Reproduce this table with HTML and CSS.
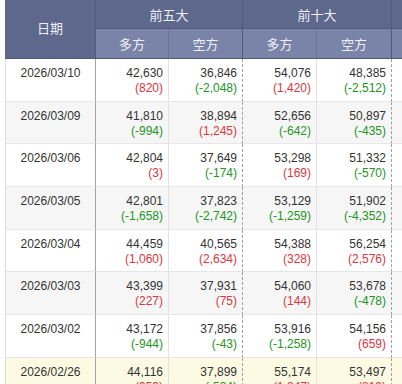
FILE: index.html
```html
<!DOCTYPE html>
<html>
<head>
  <title>大額交易人未沖銷部位</title>
  <link rel="stylesheet" href="styles.css">
</head>
<body>
  <table class="grid">
    <colgroup>
      <col class="c-date">
      <col class="c-a">
      <col class="c-b">
      <col class="c-b">
      <col class="c-c">
      <col class="c-c">
    </colgroup>
    <thead>
      <tr class="top">
        <th rowspan="2" class="h-date">日期</th>
        <th colspan="2" class="h-grp">前五大</th>
        <th colspan="2" class="h-grp">前十大</th>
        <th class="h-grp"></th>
      </tr>
      <tr class="sub">
        <th class="h-long">多方</th>
        <th class="h-short">空方</th>
        <th class="h-long">多方</th>
        <th class="h-short">空方</th>
        <th class="h-long"></th>
      </tr>
    </thead>
    <tbody>
      <tr>
        <td class="date">2026/03/10</td>
        <td class="long">42,630<br><span class="up">(820)</span></td>
        <td class="short">36,846<br><span class="down">(-2,048)</span></td>
        <td class="long">54,076<br><span class="up">(1,420)</span></td>
        <td class="short">48,385<br><span class="down">(-2,512)</span></td>
        <td class="long"></td>
      </tr>
      <tr class="alt">
        <td class="date">2026/03/09</td>
        <td class="long">41,810<br><span class="down">(-994)</span></td>
        <td class="short">38,894<br><span class="up">(1,245)</span></td>
        <td class="long">52,656<br><span class="down">(-642)</span></td>
        <td class="short">50,897<br><span class="down">(-435)</span></td>
        <td class="long"></td>
      </tr>
      <tr>
        <td class="date">2026/03/06</td>
        <td class="long">42,804<br><span class="up">(3)</span></td>
        <td class="short">37,649<br><span class="down">(-174)</span></td>
        <td class="long">53,298<br><span class="up">(169)</span></td>
        <td class="short">51,332<br><span class="down">(-570)</span></td>
        <td class="long"></td>
      </tr>
      <tr class="alt">
        <td class="date">2026/03/05</td>
        <td class="long">42,801<br><span class="down">(-1,658)</span></td>
        <td class="short">37,823<br><span class="down">(-2,742)</span></td>
        <td class="long">53,129<br><span class="down">(-1,259)</span></td>
        <td class="short">51,902<br><span class="down">(-4,352)</span></td>
        <td class="long"></td>
      </tr>
      <tr>
        <td class="date">2026/03/04</td>
        <td class="long">44,459<br><span class="up">(1,060)</span></td>
        <td class="short">40,565<br><span class="up">(2,634)</span></td>
        <td class="long">54,388<br><span class="up">(328)</span></td>
        <td class="short">56,254<br><span class="up">(2,576)</span></td>
        <td class="long"></td>
      </tr>
      <tr class="alt">
        <td class="date">2026/03/03</td>
        <td class="long">43,399<br><span class="up">(227)</span></td>
        <td class="short">37,931<br><span class="up">(75)</span></td>
        <td class="long">54,060<br><span class="up">(144)</span></td>
        <td class="short">53,678<br><span class="down">(-478)</span></td>
        <td class="long"></td>
      </tr>
      <tr>
        <td class="date">2026/03/02</td>
        <td class="long">43,172<br><span class="down">(-944)</span></td>
        <td class="short">37,856<br><span class="down">(-43)</span></td>
        <td class="long">53,916<br><span class="down">(-1,258)</span></td>
        <td class="short">54,156<br><span class="up">(659)</span></td>
        <td class="long"></td>
      </tr>
      <tr class="mark">
        <td class="date">2026/02/26</td>
        <td class="long">44,116<br><span class="up">(959)</span></td>
        <td class="short">37,899<br><span class="down">(-534)</span></td>
        <td class="long">55,174<br><span class="up">(1,247)</span></td>
        <td class="short">53,497<br><span class="up">(819)</span></td>
        <td class="long"></td>
      </tr>
    </tbody>
  </table>
</body>
</html>
```

FILE: styles.css
```css
body {
  margin: 0;
  padding-left: 5px;
  background: #fff;
  overflow: hidden;
  font-family: "Liberation Sans", "Noto Sans CJK TC", sans-serif;
}
.grid {
  border-collapse: separate;
  border-spacing: 0;
  table-layout: fixed;
  width: 462px;
  font-size: 12px;
  color: #333;
}
.c-date { width: 91px; }
.c-a { width: 73px; }
.c-b { width: 74px; }
.c-c { width: 75px; }

/* header */
th {
  font-family: "Noto Sans CJK TC", "Liberation Sans", sans-serif;
  font-size: 13px;
  font-weight: normal;
  color: #eef0f5;
  padding: 0;
}
.top th {
  background: #5d688c;
  height: 28px;
  border-bottom: 1px solid #4f5a7c;
  border-right: 1px solid #4f5a7c;
}
.top .h-date {
  height: auto;
  padding-bottom: 4px;
}
.sub th {
  background: #7a84a8;
  height: 29px;
  border-bottom: 1px solid #4f5a7c;
}
.sub .h-long { border-right: 1px solid #6b7598; }
.sub .h-short { border-right: 1px solid #4f5a7c; }

/* body */
td {
  height: 34.7px;
  padding: 7px 5px 0 0;
  line-height: 15px;
  vertical-align: top;
  text-align: right;
  border-bottom: 1px solid #e6e6e6;
  white-space: nowrap;
}
td.date {
  text-align: center;
  padding-right: 0;
  border-left: 1px solid #dcdcdc;
  border-right: 1px solid #a3a3a3;
}
td.long { border-right: 1px solid #e2e2e2; }
td.short { border-right: 1px dashed #a0a0a0; }
tr.alt td { background: #f6f6f6; }
tr.mark td { background: #fdfae3; }
.up { color: #d9363e; }
.down { color: #23951f; }
```
